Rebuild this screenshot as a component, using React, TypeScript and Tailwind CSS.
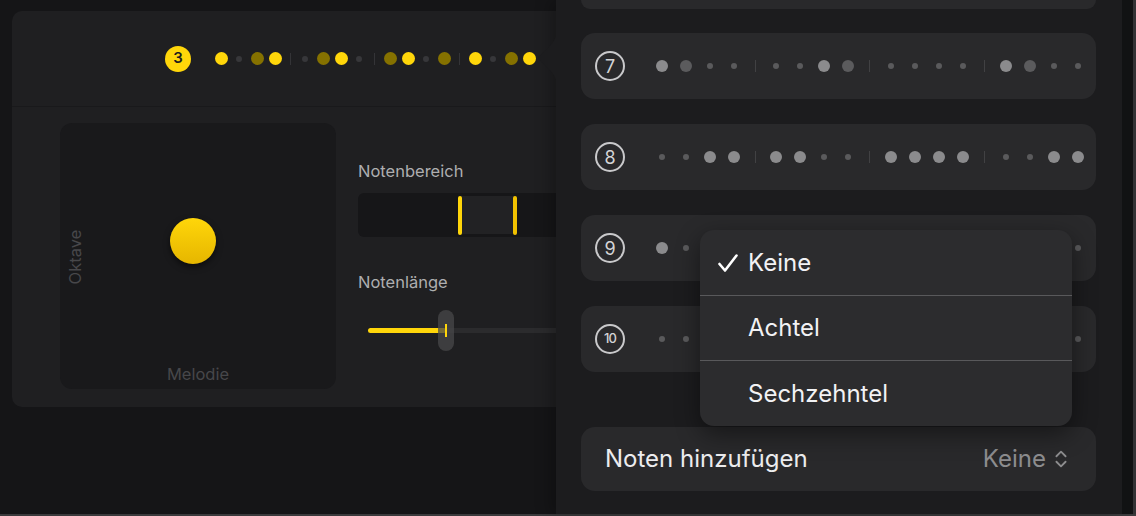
import React from 'react';
import { ChevronsUpDown } from 'lucide-react';

type HeaderDot = 'B' | 'O' | 's';
type RowDot = 'b' | 'd' | 's';

// yellow step pattern in the card header
const HEADER_GROUPS: HeaderDot[][] = [
  ['B', 's', 'O', 'B'],
  ['s', 'O', 'B', 's'],
  ['O', 'B', 's', 'O'],
  ['B', 's', 'O', 'B'],
];

const ROWS: { n: string; groups: RowDot[][] }[] = [
  { n: '7', groups: [['b', 'd', 's', 's'], ['s', 's', 'b', 'd'], ['s', 's', 's', 's'], ['b', 'd', 's', 's']] },
  { n: '8', groups: [['s', 's', 'b', 'b'], ['b', 'b', 's', 's'], ['b', 'b', 'b', 'b'], ['s', 's', 'b', 'b']] },
  { n: '9', groups: [['b', 's', 's', 'b'], ['s', 'b', 's', 's'], ['b', 's', 'b', 's'], ['s', 'b', 's', 's']] },
  { n: '10', groups: [['s', 's', 'b', 's'], ['s', 's', 's', 'b'], ['b', 's', 's', 's'], ['s', 'b', 's', 's']] },
];

const font = { fontFamily: 'Inter, "Noto Sans", sans-serif' };

const YellowDot: React.FC<{ kind: HeaderDot }> = ({ kind }) => (
  <div className="w-[18px] flex items-center justify-center">
    {kind === 'B' && <div className="w-[13px] h-[13px] rounded-full bg-[#ffd60a]" />}
    {kind === 'O' && <div className="w-[13px] h-[13px] rounded-full bg-[#857100]" />}
    {kind === 's' && <div className="w-[6px] h-[6px] rounded-full bg-[#37373a]" />}
  </div>
);

const GrayDot: React.FC<{ kind: RowDot }> = ({ kind }) => (
  <div className="w-[24px] flex items-center justify-center">
    {kind === 'b' && <div className="w-[12px] h-[12px] rounded-full bg-[#8b8b8d]" />}
    {kind === 'd' && <div className="w-[12px] h-[12px] rounded-full bg-[#5b5b5d]" />}
    {kind === 's' && <div className="w-[6px] h-[6px] rounded-full bg-[#5a5a5c]" />}
  </div>
);

const PatternRow: React.FC<{ n: string; groups: RowDot[][] }> = ({ n, groups }) => (
  <div className="h-[66px] rounded-[14px] bg-[#29292b] flex items-center pl-[14px]">
    <div className="w-[30px] h-[30px] rounded-full border-2 border-[#c9c9cb] flex items-center justify-center text-[#d4d4d6]">
      <span className={n.length > 1 ? 'text-[13px] font-medium tracking-[-1px]' : 'text-[18px]'}>{n}</span>
    </div>
    <div className="flex items-center ml-[25px]">
      {groups.map((g, gi) => (
        <React.Fragment key={gi}>
          {gi > 0 && (
            <div className={`${gi === 1 ? 'w-[18px]' : 'w-[19px]'} flex justify-center`}>
              <div className="w-px h-[12px] bg-[#414143]" />
            </div>
          )}
          <div className="flex">
            {g.map((d, di) => (
              <GrayDot key={di} kind={d} />
            ))}
          </div>
        </React.Fragment>
      ))}
    </div>
  </div>
);

const Check: React.FC = () => (
  <svg width="20" height="18" viewBox="0 0 20 18" fill="none">
    <path d="M1.5 10 L7 16.5 L18.5 1.5" stroke="#ffffff" strokeWidth="2.6" strokeLinecap="round" strokeLinejoin="round" />
  </svg>
);

export default function App() {
  return (
    <div className="w-[1136px] h-[516px] flex flex-col bg-[#151517] overflow-hidden" style={font}>
      <div className="flex h-[514px]">
        {/* left: player card */}
        <div className="w-[556px] shrink-0 pl-[12px] pt-[11px] overflow-hidden">
          <div className="w-[600px] h-[396px] bg-[#1f1f21] rounded-[10px] flex flex-col">
            <div className="h-[96px] border-b border-[#19191b] flex items-center pl-[153px]">
              <div className="w-[26px] h-[26px] rounded-full bg-[#ffd60a] flex items-center justify-center text-[15px] font-semibold text-[#1c1c1e]">
                3
              </div>
              <div className="flex items-center ml-[21px]">
                {HEADER_GROUPS.map((g, gi) => (
                  <React.Fragment key={gi}>
                    {gi > 0 && (
                      <div className={`${gi === 1 ? 'w-[12px]' : 'w-[13px]'} flex justify-center`}>
                        <div className="w-px h-[12px] bg-[#343437]" />
                      </div>
                    )}
                    <div className="flex">
                      {g.map((d, di) => (
                        <YellowDot key={di} kind={d} />
                      ))}
                    </div>
                  </React.Fragment>
                ))}
              </div>
            </div>

            <div className="flex items-start pl-[48px] pt-[16px]">
              {/* XY pad */}
              <div className="relative shrink-0 w-[276px] h-[266px] rounded-[12px] bg-[#19191b]">
                <div className="absolute left-[15px] top-[134px] -translate-x-1/2 -translate-y-1/2 -rotate-90 text-[16.5px] text-[#47474a]">
                  Oktave
                </div>
                <div className="absolute left-0 right-0 bottom-[2px] text-center text-[16.5px] text-[#47474a]">
                  Melodie
                </div>
                <div className="absolute left-[110px] top-[95px] w-[46px] h-[46px] rounded-full bg-gradient-to-b from-[#ffd60a] to-[#e6b600] shadow-[0_3px_6px_rgba(0,0,0,0.55)]" />
              </div>

              {/* sliders */}
              <div className="ml-[22px] shrink-0 w-[260px] flex flex-col pt-[37px]">
                <div className="text-[16.5px] leading-[22px] text-[#aeaeb0]">Notenbereich</div>
                <div className="mt-[11px] h-[44px] rounded-[6px] bg-[#161618] relative">
                  <div className="absolute left-[103px] top-[3px] w-[55px] h-[38px] bg-[#222224]" />
                  <div className="absolute left-[100px] top-[3px] w-[4px] h-[39px] rounded-full bg-[#ffd60a]" />
                  <div className="absolute left-[155px] top-[3px] w-[4px] h-[39px] rounded-full bg-[#f2c200]" />
                </div>
                <div className="mt-[34px] text-[16.5px] leading-[22px] text-[#aeaeb0]">Notenlänge</div>
                <div className="mt-[17px] h-[41px] relative">
                  <div className="absolute left-[84px] right-0 top-[18px] h-[5px] bg-[#2b2b2d]" />
                  <div className="absolute left-[10px] w-[78px] top-[18px] h-[5px] rounded-full bg-[#ffd60a]" />
                  <div className="absolute left-[80px] top-0 w-[16px] h-[41px] rounded-full bg-[#48484a]/75" />
                  <div className="absolute left-[87px] top-[14px] w-[2px] h-[13px] bg-[#ffd60a]" />
                </div>
              </div>
            </div>
          </div>
        </div>

        {/* right: popover panel */}
        <div className="relative shrink-0 w-[566px] bg-[#1c1c1e] shadow-[-6px_0_14px_rgba(0,0,0,0.25)]">
          <svg className="absolute -left-[19px] top-[33px]" width="19" height="50" viewBox="0 0 19 50">
            <path d="M19.5 0 C19 9 9 17 2 23 Q0 25 2 27 C9 33 19 41 19.5 50 Z" fill="#1c1c1e" />
          </svg>

          <div className="flex flex-col pl-[25px] pr-[26px]">
            <div className="h-[9px] rounded-b-[14px] bg-[#29292b]" />
            <div className="flex flex-col gap-[25px] mt-[24px]">
              {ROWS.map(r => (
                <PatternRow key={r.n} n={r.n} groups={r.groups} />
              ))}
            </div>
            <div className="mt-[55px] h-[64px] rounded-[14px] bg-[#29292b] flex items-center justify-between pl-[24px] pr-[24px]">
              <span className="text-[24px] text-[#ececee]">Noten hinzufügen</span>
              <span className="flex items-center gap-[4px] text-[24px] text-[#8d8d8f]">
                Keine
                <ChevronsUpDown size={22} strokeWidth={2} className="text-[#8d8d8f]" />
              </span>
            </div>
          </div>

          {/* dropdown menu */}
          <div className="absolute left-[144px] top-[230px] w-[372px] rounded-[14px] bg-[#2c2c2e] shadow-[0_8px_24px_rgba(0,0,0,0.45)] flex flex-col text-[24px] text-[#f2f2f4]">
            <div className="h-[65px] flex items-center pl-[18px]">
              <Check />
              <span className="ml-[10px]">Keine</span>
            </div>
            <div className="h-px bg-[#59595b]" />
            <div className="h-[64px] flex items-center pl-[48px]">Achtel</div>
            <div className="h-px bg-[#59595b]" />
            <div className="h-[65px] flex items-center pl-[48px]">Sechzehntel</div>
          </div>
        </div>
        <div className="w-[11px] shrink-0 bg-[#121314]" />
        <div className="w-[3px] shrink-0 bg-[#333335]" />
      </div>
      <div className="h-[2px] bg-[#3a3a3c]" />
    </div>
  );
}
